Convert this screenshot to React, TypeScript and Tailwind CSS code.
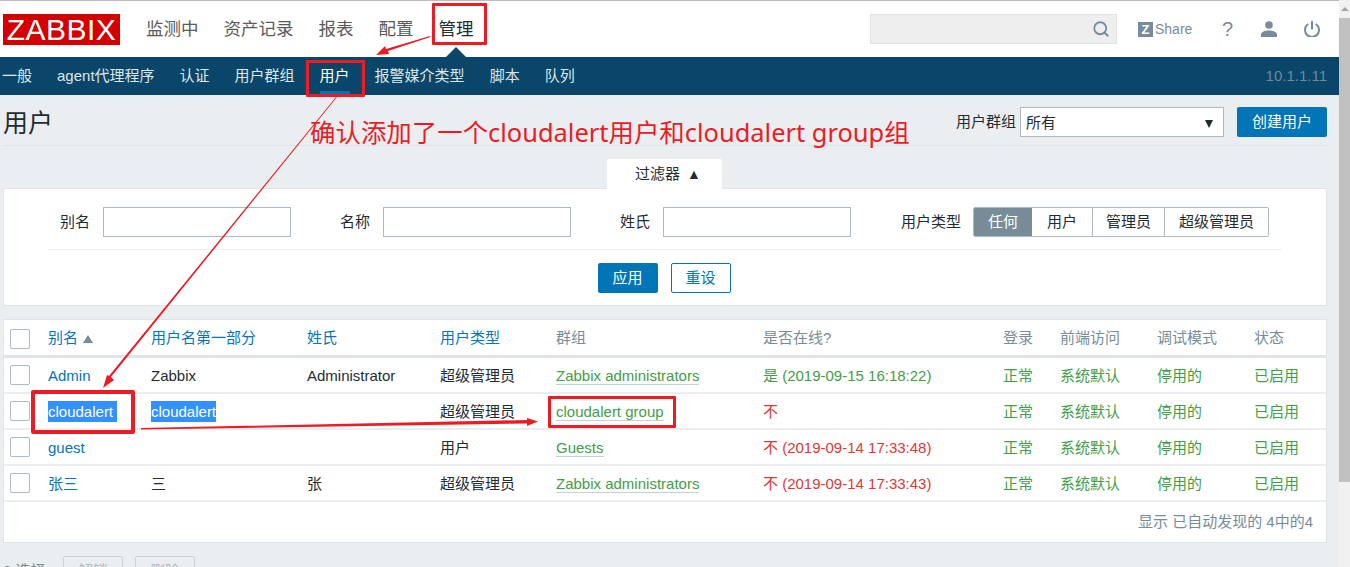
import { Search } from "lucide-react";

const ROW = "grid grid-cols-[44px_103px_156px_133px_116px_207px_240px_57px_97px_97px_1fr] items-center";
const G = "text-[#429e47]";
const R = "text-[#e33734]";
const B = "text-[#0275b8]";

type U = { a: string; n: string; s: string; t: string; g: string; o: string; ok: boolean; sel?: boolean };
const users: U[] = [
  { a: "Admin", n: "Zabbix", s: "Administrator", t: "超级管理员", g: "Zabbix administrators", o: "是 (2019-09-15 16:18:22)", ok: true },
  { a: "cloudalert", n: "cloudalert", s: "", t: "超级管理员", g: "cloudalert group", o: "不", ok: false, sel: true },
  { a: "guest", n: "", s: "", t: "用户", g: "Guests", o: "不 (2019-09-14 17:33:48)", ok: false },
  { a: "张三", n: "三", s: "张", t: "超级管理员", g: "Zabbix administrators", o: "不 (2019-09-14 17:33:43)", ok: false },
];

function Box() {
  return <div className="h-5 w-5 rounded-[2px] border border-[#acbbc2] bg-white" />;
}

function Field({ label, w }: { label: string; w: string }) {
  return (
    <div className={`flex items-center justify-end gap-[13px] ${w}`}>
      <span>{label}</span>
      <div className="h-[30px] w-[188px] border border-[#acbbc2] bg-white" />
    </div>
  );
}

export default function App() {
  return (
    <div
      className="relative flex h-[567px] w-[1350px] overflow-hidden bg-[#ebeef0] text-[15px] text-[#1f2c33]"
      style={{ fontFamily: '"Liberation Sans", "Noto Sans CJK SC", sans-serif' }}
    >
      <div className="w-[1339px] shrink-0">
        {/* header */}
        <header className="flex h-[57px] items-start border-t border-[#bbbbbb] bg-white">
          <div className="ml-[3px] mt-[13px] flex h-[31px] w-[117px] items-center justify-center bg-[#d40000] text-[30px] leading-none tracking-[0.5px] text-white">
            ZABBIX
          </div>
          <nav className="ml-[26px] mt-[15px] flex gap-[25px] text-[17.5px] leading-[26px] text-[#5a5a5a]">
            <span>监测中</span>
            <span>资产记录</span>
            <span>报表</span>
            <span>配置</span>
            <span className="text-[#1f2c33]">管理</span>
          </nav>
          <div className="ml-auto mr-[19px] mt-[13px] flex items-center text-[#768d99]">
            <div className="flex h-[30px] w-[247px] items-center justify-end border border-[#e2e2e2] bg-[#eeeeee] pr-[6px]">
              <Search size={18} strokeWidth={2.4} />
            </div>
            <div className="ml-[21px] flex h-[15px] w-[15px] items-center justify-center bg-[#768d99] text-[13px] font-bold leading-none text-white">
              Z
            </div>
            <span className="ml-[2px] w-[35px] text-[14px]">Share</span>
            <span className="ml-[32px] w-[10px] text-[20px] leading-[24px]">?</span>
            <svg className="ml-[29px]" width="16" height="16" viewBox="0 0 16 16" fill="currentColor">
              <circle cx="8" cy="4" r="3.800" />
              <path d="M0 16v-2.500C0 11 4 9.500 8 9.500s8 1.500 8 4V16z" />
            </svg>
            <svg className="ml-[27px]" width="16" height="16" viewBox="0 0 16 16" fill="none" stroke="currentColor" strokeWidth="2">
              <path d="M8 0v8.500" />
              <path d="M4.300 3a7 7 0 1 0 7.400 0" />
            </svg>
          </div>
        </header>

        {/* sub nav */}
        <div className="flex h-[38px] items-center bg-[#0a466a] pl-[2px] pr-[12px] text-[15px] text-[#dde6eb]">
          <div className="flex gap-[25px]">
            <span>一般</span>
            <span>agent代理程序</span>
            <span>认证</span>
            <span>用户群组</span>
            <span className="relative text-white">
              用户
              <span className="absolute -bottom-[7px] left-0 h-[3px] w-full bg-[#0275b8]" />
            </span>
            <span>报警媒介类型</span>
            <span>脚本</span>
            <span>队列</span>
          </div>
          <span className="ml-auto text-[#6d8a9c]">10.1.1.11</span>
        </div>

        <main className="pl-[3px] pr-[12px]">
          {/* title */}
          <div className="flex h-[51px] items-start justify-between border-b border-[#dfe4e7]">
            <h1 className="mt-[13px] text-[25px] leading-[30px]">用户</h1>
            <div className="mt-[12px] flex items-center">
              <span>用户群组</span>
              <div className="ml-1 flex h-[30px] w-[204px] items-center justify-between border border-[#acbbc2] bg-white pl-[5px] pr-[10px] pt-[3px]">
                <span>所有</span>
                <span className="h-0 w-0 border-x-[4px] border-t-[8px] border-x-transparent border-t-[#1f2c33]" />
              </div>
              <button className="ml-[13px] h-[30px] w-[90px] rounded-[2px] bg-[#0275b8] text-white">创建用户</button>
            </div>
          </div>

          {/* filter */}
          <div className="mt-[13px] flex justify-center pr-[1px]">
            <div className="z-10 -mb-[1px] flex h-[30px] w-[115px] items-center justify-center gap-[7px] rounded-t-[2px] bg-white pl-[7px]">
              <span>过滤器</span>
              <span className="text-[14px] leading-none">▲</span>
            </div>
          </div>
          <section className="h-[118px] border border-[#dfe4e7] bg-white">
            <div className="mx-[44px] flex h-[61px] items-start border-b border-[#ebeef0] pt-[18px]">
              <Field label="别名" w="w-[243px]" />
              <Field label="名称" w="w-[280px]" />
              <Field label="姓氏" w="w-[280px]" />
              <div className="ml-[50px] flex items-center gap-3">
                <span>用户类型</span>
                <div className="flex h-[30px] overflow-hidden rounded-[2px] border border-[#acbbc2]">
                  <span className="flex w-[58px] items-center justify-center bg-[#768d99] text-white">任何</span>
                  <span className="flex w-[60px] items-center justify-center">用户</span>
                  <span className="flex w-[73px] items-center justify-center border-x border-[#acbbc2]">管理员</span>
                  <span className="flex w-[103px] items-center justify-center">超级管理员</span>
                </div>
              </div>
            </div>
            <div className="mt-[13px] flex justify-center gap-[13px] pr-[2px]">
              <button className="h-[30px] w-[60px] rounded-[2px] bg-[#0275b8] text-white">应用</button>
              <button className="h-[30px] w-[60px] rounded-[2px] border border-[#0275b8] bg-white text-[#0275b8]">重设</button>
            </div>
          </section>

          {/* table */}
          <section className="mt-[13px] h-[224px] border border-[#dfe4e7] bg-white">
            <div className={`${ROW} h-[35px] pt-[2px] text-[#768d99]`}>
              <div className="pl-[6px]"><Box /></div>
              <div className={`flex items-center gap-[5px] ${B}`}>
                别名
                <span className="h-0 w-0 border-x-[5px] border-b-[8px] border-x-transparent border-b-[#768d99]" />
              </div>
              <div className={B}>用户名第一部分</div>
              <div className={B}>姓氏</div>
              <div className={B}>用户类型</div>
              <div>群组</div>
              <div>是否在线?</div>
              <div>登录</div>
              <div>前端访问</div>
              <div>调试模式</div>
              <div>状态</div>
            </div>
            <div className="h-[3px] bg-[#dfe4e7]" />
            {users.map((u) => (
              <div key={u.a} className={`${ROW} h-[36px] border-b-[2px] border-[#ebeef0] pt-[2px]`}>
                <div className="-mt-[2px] pl-[6px]"><Box /></div>
                <div className={u.sel ? "" : B}>
                  {u.sel ? <span className="bg-[#3390ff] py-[2px] pr-[4px] text-white">cloudalert</span> : u.a}
                </div>
                <div>{u.sel ? <span className="bg-[#3390ff] py-[2px] text-white">cloudalert</span> : u.n}</div>
                <div>{u.s}</div>
                <div>{u.t}</div>
                <div>
                  <span className={`border-b border-[#c5d0d6] ${G}`}>{u.g}</span>
                </div>
                <div className={u.ok ? G : R}>{u.o}</div>
                <div className={G}>正常</div>
                <div className={G}>系统默认</div>
                <div className={G}>停用的</div>
                <div className={G}>已启用</div>
              </div>
            ))}
            <div className="flex h-[41px] items-center justify-end pr-[13px] text-[#768d99]">显示 已自动发现的 4中的4</div>
          </section>

          {/* footer actions */}
          <div className="mt-[13px] flex items-center">
            <span className="w-[60px] text-[#768d99]">0 选择</span>
            <button className="h-[30px] w-[60px] rounded-[2px] border border-[#c9d2d7] text-[#acbbc2]">解锁</button>
            <button className="ml-[12px] h-[30px] w-[60px] rounded-[2px] border border-[#c9d2d7] text-[#acbbc2]">删除</button>
          </div>
        </main>
      </div>

      {/* scrollbar */}
      <div className="flex h-full w-[11px] flex-col bg-[#f1f1f1]">
        <div className="flex h-[18px] items-center justify-center">
          <span className="h-0 w-0 border-x-[4px] border-b-[4px] border-x-transparent border-b-[#a3a3a3]" />
        </div>
        <div className="h-[464px] bg-[#c1c1c1]" />
      </div>

      {/* triangle under active menu */}
      <div className="absolute left-[446px] top-[47px] h-0 w-0 border-x-[10px] border-b-[10px] border-x-transparent border-b-[#0a466a]" />

      {/* screenshot annotations */}
      <div className="absolute left-[432px] top-[3px] h-[42px] w-[55px] rounded-[1px] border-[3px] border-[#ed1c24]" />
      <div className="absolute left-[306px] top-[60px] h-[37px] w-[59px] rounded-[1px] border-[3px] border-[#ed1c24]" />
      <div className="absolute left-[31px] top-[390px] h-[44px] w-[104px] rounded-[2px] border-[4px] border-[#ed1c24]" />
      <div className="absolute left-[548px] top-[396px] h-[32px] w-[128px] rounded-[1px] border-[3px] border-[#ed1c24]" />
      <div
        className="absolute left-[310px] top-[114px] whitespace-nowrap text-[25.45px] leading-[36px] text-[#ed1c24]"
        style={{ fontFamily: '"Noto Sans", "Noto Sans CJK SC", sans-serif' }}
      >
        确认添加了一个cloudalert用户和cloudalert group组
      </div>
      <svg className="pointer-events-none absolute left-0 top-0" width="1350" height="567" fill="#ed1c24">
        <polygon points="430,36 430.500,37 388,51 389,54 376,55 385,46 386,49" />
        <polygon points="336,97 336.600,97.500 111,377 114,380 103,388 107,375 109,376" />
        <polygon points="141,428 141,429.500 527,423.500 527,426 538,421.500 527,418 527,420" />
      </svg>
    </div>
  );
}
